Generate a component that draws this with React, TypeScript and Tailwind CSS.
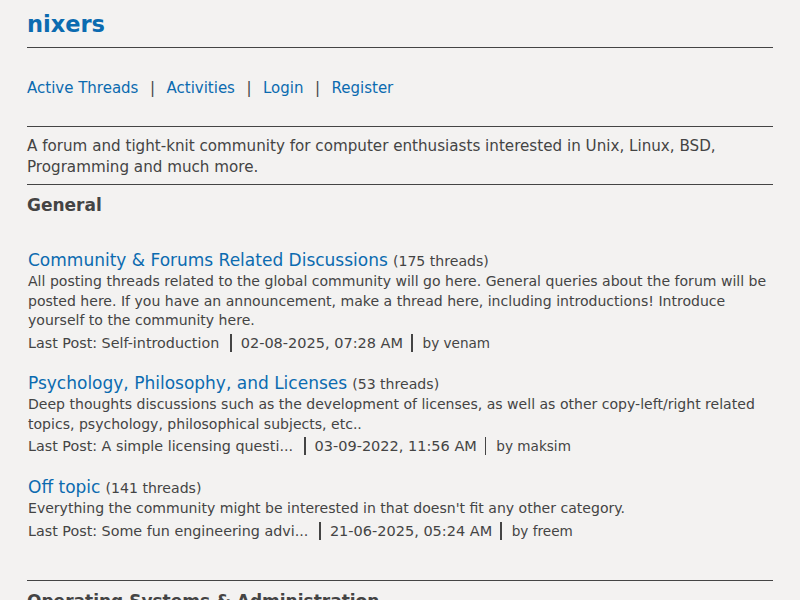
const forums = [
  {
    title: "Community & Forums Related Discussions",
    count: "175 threads",
    desc: "All posting threads related to the global community will go here. General queries about the forum will be posted here. If you have an announcement, make a thread here, including introductions! Introduce yourself to the community here.",
    last: "Self-introduction",
    date: "02-08-2025, 07:28 AM",
    by: "venam",
  },
  {
    title: "Psychology, Philosophy, and Licenses",
    count: "53 threads",
    desc: "Deep thoughts discussions such as the development of licenses, as well as other copy-left/right related topics, psychology, philosophical subjects, etc..",
    last: "A simple licensing questi...",
    date: "03-09-2022, 11:56 AM",
    by: "maksim",
  },
  {
    title: "Off topic",
    count: "141 threads",
    desc: "Everything the community might be interested in that doesn't fit any other category.",
    last: "Some fun engineering advi...",
    date: "21-06-2025, 05:24 AM",
    by: "freem",
  },
];

function Sep({ second }: { second?: boolean }) {
  return (
    <span
      className={
        second
          ? "ml-[8px] mr-[10px] inline-block h-[18px] w-[1.5px] translate-y-[4px] bg-[#444]"
          : "ml-[11px] mr-[9px] inline-block h-[18px] w-[1.5px] translate-y-[4px] bg-[#444]"
      }
    />
  );
}

export default function App() {
  return (
    <div className="min-h-screen bg-[#f3f2f1] font-['DejaVu_Sans',sans-serif] text-[#444]">
      <div className="mx-auto w-[746px] pt-[9px]">
        <h1 className="text-[22.5px] font-bold leading-[31px] text-[#0b6bb0]">nixers</h1>
        <hr className="mt-[7px] border-t border-[#444]" />

        <nav className="mt-[29px] text-[15px] leading-[22px]">
          <a className="text-[#0b6bb0]">Active Threads</a>
          <span className="mx-[11.5px]">|</span>
          <a className="text-[#0b6bb0]">Activities</a>
          <span className="mx-[11.5px]">|</span>
          <a className="text-[#0b6bb0]">Login</a>
          <span className="mx-[11.5px]">|</span>
          <a className="text-[#0b6bb0]">Register</a>
        </nav>

        <hr className="mt-[27px] border-t border-[#444]" />
        <p className="mt-[9px] text-[15.15px] leading-[21px]">
          A forum and tight-knit community for computer enthusiasts interested in Unix, Linux, BSD, Programming and much more.
        </p>
        <hr className="mt-[6px] border-t border-[#444]" />

        <h2 className="mt-[8px] text-[17px] font-bold leading-[24px]">General</h2>

        <div className="mt-[32px] flex flex-col gap-[19.5px] pl-[1px]">
          {forums.map((f) => (
            <div key={f.title}>
              <div className="leading-[22px]">
                <a className="text-[17px] text-[#0b6bb0]">{f.title}</a>{" "}
                <span className="text-[14.1px]">({f.count})</span>
              </div>
              <p className="text-[14.05px] leading-[19.6px]">{f.desc}</p>
              <p className="-mt-[1px] text-[14.5px] leading-[20px]">
                <span className="text-[14.3px]">Last Post: {f.last}</span>
                <Sep />
                {f.date}
                <Sep second />
                <span className="text-[13.6px]">by {f.by}</span>
              </p>
            </div>
          ))}
        </div>

        <hr className="mt-[39px] border-t border-[#444]" />
        <h2 className="mt-[8px] text-[17px] font-bold leading-[24px]">Operating Systems &amp; Administration</h2>
      </div>
    </div>
  );
}
